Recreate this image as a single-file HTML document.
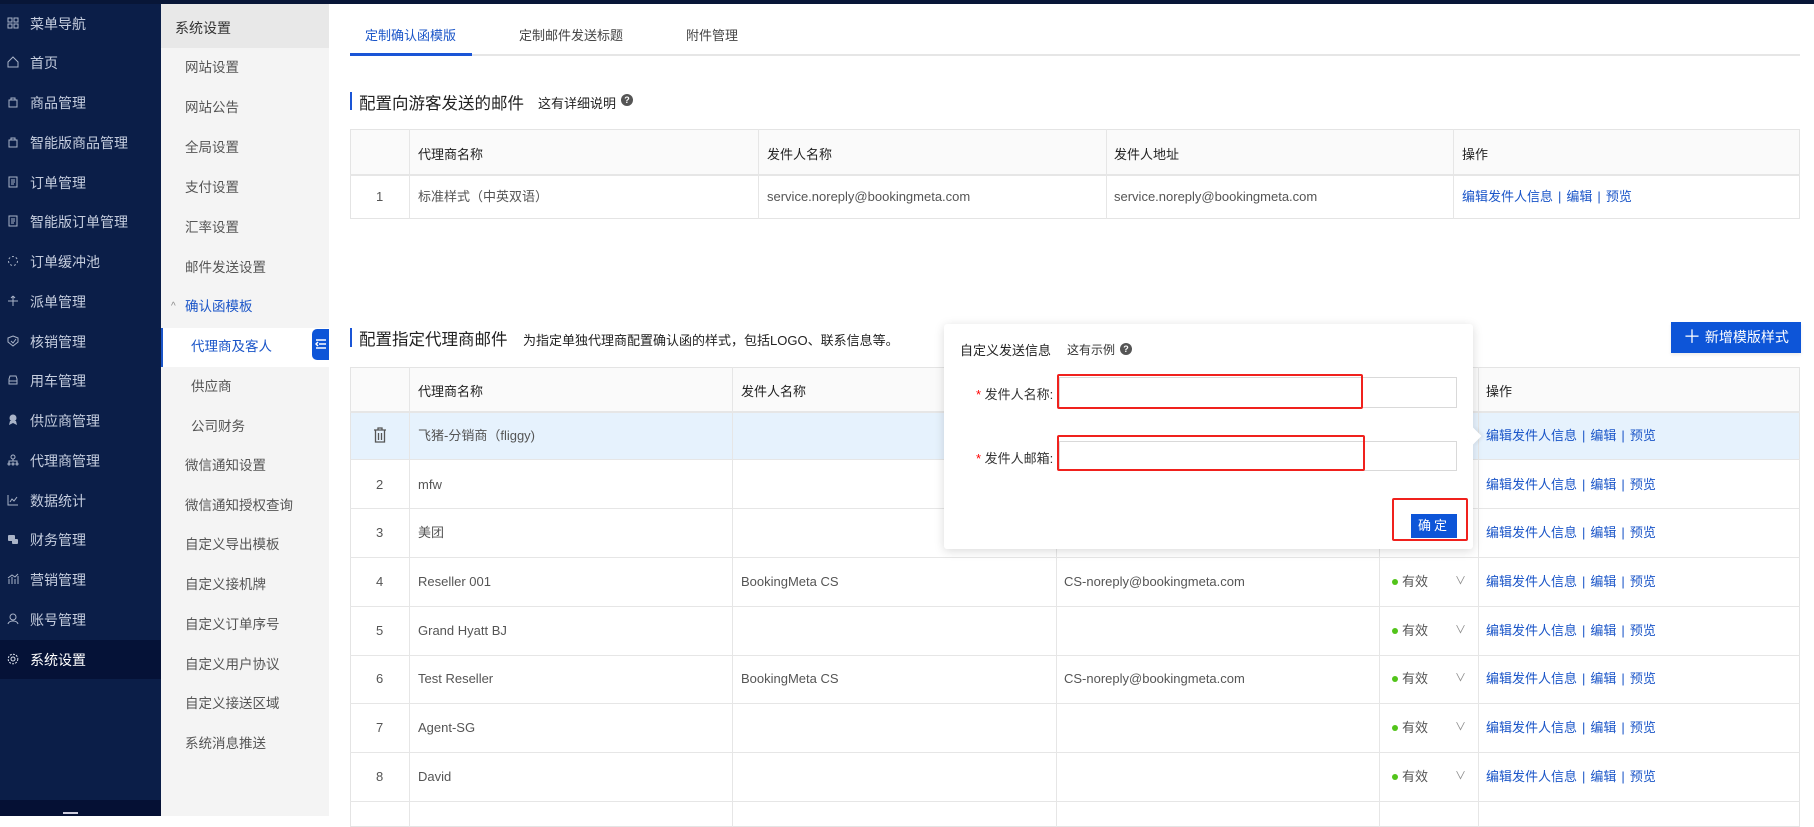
<!DOCTYPE html>
<html><head><meta charset="utf-8"><style>
*{margin:0;padding:0;box-sizing:border-box}
body{width:1814px;height:816px;overflow:hidden;background:#fff;font-family:"Liberation Sans","Noto Sans CJK SC",sans-serif;position:relative;color:#333}
.a{position:absolute;white-space:nowrap}
#top{left:0;top:0;width:1814px;height:4px;background:#081637}
#sb{left:0;top:4px;width:161px;height:812px;background:#0b1e48}
.si{position:absolute;left:0;width:161px;height:40px;line-height:40px;color:#c5cdde;font-size:14px;padding-left:30px}
.si svg{position:absolute;left:7px;top:13px}
#sub{left:161px;top:4px;width:168px;height:812px;background:#f4f4f4}
.su{position:absolute;left:24px;font-size:13.5px;color:#555;line-height:20px}
.line{position:absolute;background:#e6e6e6}
.txt{position:absolute;font-size:13px;color:#555;white-space:nowrap;line-height:18px}
.lk{color:#1a55c8}
.lk i{font-style:normal;padding:0 5px}
.hd{position:absolute;font-size:13px;color:#222;white-space:nowrap}
</style></head><body>
<div id="top" class="a"></div>
<div id="sb" class="a">
 <div class="si" style="top:0"><svg width="12" height="12" fill="none" stroke="#aab4c8"><rect x="1" y="1" width="4" height="4"/><rect x="7" y="1" width="4" height="4"/><rect x="1" y="7" width="4" height="4"/><rect x="7" y="7" width="4" height="4"/></svg>菜单导航</div>
 <div class="si" style="top:39px"><svg width="12" height="12" fill="none" stroke="#aab4c8"><path d="M1 6L6 1L11 6V11H1Z"/></svg>首页</div>
 <div class="si" style="top:79px"><svg width="12" height="12" fill="none" stroke="#aab4c8"><path d="M2 4H10V11H2Z M4 4V2H8V4"/></svg>商品管理</div>
 <div class="si" style="top:119px"><svg width="12" height="12" fill="none" stroke="#aab4c8"><path d="M2 4H10V11H2Z M4 4V2H8V4"/></svg>智能版商品管理</div>
 <div class="si" style="top:159px"><svg width="12" height="12" fill="none" stroke="#aab4c8"><rect x="2" y="1" width="8" height="10"/><path d="M4 4H8M4 6H8M4 8H7"/></svg>订单管理</div>
 <div class="si" style="top:198px"><svg width="12" height="12" fill="none" stroke="#aab4c8"><rect x="2" y="1" width="8" height="10"/><path d="M4 4H8M4 6H8M4 8H7"/></svg>智能版订单管理</div>
 <div class="si" style="top:238px"><svg width="12" height="12" fill="none" stroke="#aab4c8" stroke-dasharray="2 2"><circle cx="6" cy="6" r="4.5"/></svg>订单缓冲池</div>
 <div class="si" style="top:278px"><svg width="12" height="12" fill="none" stroke="#aab4c8"><path d="M6 1V11M1 6H11M6 1L4 3M6 1L8 3"/></svg>派单管理</div>
 <div class="si" style="top:318px"><svg width="12" height="12" fill="none" stroke="#aab4c8"><path d="M6 1L11 3V7L6 11L1 7V3Z M4 6L6 8L9 4"/></svg>核销管理</div>
 <div class="si" style="top:357px"><svg width="12" height="12" fill="none" stroke="#aab4c8"><path d="M2 5L3 2H9L10 5V10H2Z M2 7H10"/></svg>用车管理</div>
 <div class="si" style="top:397px"><svg width="12" height="12" fill="#aab4c8"><circle cx="6" cy="4" r="3.5"/><path d="M3 7L2 11L6 9L10 11L9 7Z"/></svg>供应商管理</div>
 <div class="si" style="top:437px"><svg width="12" height="12" fill="none" stroke="#aab4c8"><circle cx="6" cy="3" r="2"/><path d="M6 5V7M2 9V7H10V9"/><circle cx="2" cy="10" r="1"/><circle cx="6" cy="10" r="1"/><circle cx="10" cy="10" r="1"/></svg>代理商管理</div>
 <div class="si" style="top:477px"><svg width="12" height="12" fill="none" stroke="#aab4c8"><path d="M1 1V11H11M3 8L5 5L7 7L10 3"/></svg>数据统计</div>
 <div class="si" style="top:516px"><svg width="12" height="12" fill="#aab4c8"><rect x="1" y="2" width="7" height="6" rx="1"/><rect x="5" y="6" width="6" height="5" rx="1"/></svg>财务管理</div>
 <div class="si" style="top:556px"><svg width="12" height="12" fill="none" stroke="#aab4c8"><path d="M2 11V6M5 11V4M8 11V6M11 11V3M1 5L5 2L8 4L11 1"/></svg>营销管理</div>
 <div class="si" style="top:596px"><svg width="12" height="12" fill="none" stroke="#aab4c8"><circle cx="6" cy="4" r="3"/><path d="M1 11C2 7 10 7 11 11"/></svg>账号管理</div>
 <div class="si" style="top:636px;height:39px;background:#051237;color:#fff"><svg width="12" height="12" fill="none" stroke="#dde3ee"><circle cx="6" cy="6" r="2"/><circle cx="6" cy="6" r="4.8" stroke-dasharray="2 1.2"/></svg>系统设置</div>
 <div class="a" style="left:0;top:796px;width:161px;height:16px;background:#051034"></div>
 <div class="a" style="left:63px;top:808px;width:15px;height:2px;background:#ccd"></div>
</div>
<div id="sub" class="a">
 <div class="a" style="left:0;top:0;width:168px;height:44px;background:#e8e8e8"></div>
 <div class="su" style="left:14px;top:14px;color:#333;font-size:14px">系统设置</div>
 <div class="su" style="top:54px">网站设置</div>
 <div class="su" style="top:94px">网站公告</div>
 <div class="su" style="top:134px">全局设置</div>
 <div class="su" style="top:174px">支付设置</div>
 <div class="su" style="top:214px">汇率设置</div>
 <div class="su" style="top:254px">邮件发送设置</div>
 <div class="su" style="left:10px;top:293px;color:#888;font-size:10px">^</div>
 <div class="su" style="top:293px;color:#1a55c8">确认函模板</div>
 <div class="a" style="left:0;top:324px;width:168px;height:39px;background:#fff;border-left:2px solid #1a55c8"></div>
 <div class="su" style="left:30px;top:333px;color:#1a55c8">代理商及客人</div>
 <div class="a" style="left:151px;top:325px;width:17px;height:31px;background:#0d55d8;border-radius:5px 0 0 5px"></div>
 <svg class="a" style="left:154px;top:334px" width="12" height="12" fill="none" stroke="#fff" stroke-width="1.5"><path d="M1 2H11M4 6H11M1 10H11M3 4L1 6L3 8"/></svg>
 <div class="su" style="left:30px;top:373px">供应商</div>
 <div class="su" style="left:30px;top:413px">公司财务</div>
 <div class="su" style="top:452px">微信通知设置</div>
 <div class="su" style="top:492px">微信通知授权查询</div>
 <div class="su" style="top:531px">自定义导出模板</div>
 <div class="su" style="top:571px">自定义接机牌</div>
 <div class="su" style="top:611px">自定义订单序号</div>
 <div class="su" style="top:651px">自定义用户协议</div>
 <div class="su" style="top:690px">自定义接送区域</div>
 <div class="su" style="top:730px">系统消息推送</div>
</div>

<div class="txt" style="left:365px;top:27px;color:#1a55c8">定制确认函模版</div>
<div class="txt" style="left:519px;top:27px;color:#444">定制邮件发送标题</div>
<div class="txt" style="left:686px;top:27px;color:#444">附件管理</div>
<div class="line" style="left:350px;top:54px;width:1450px;height:2px"></div>
<div class="a" style="left:350px;top:53px;width:122px;height:3px;background:#1a55d6"></div>

<div class="a" style="left:350px;top:92px;width:2px;height:18px;background:#1a55d6"></div>
<div class="a" style="left:359px;top:90px;font-size:16.5px;color:#222">配置向游客发送的邮件</div>
<div class="a" style="left:538px;top:93px;font-size:13px;color:#222">这有详细说明</div>
<div class="a" style="left:621px;top:94px;width:12px;height:12px;border-radius:6px;background:#555;color:#fff;font-size:9px;line-height:12px;text-align:center;font-weight:bold">?</div>

<div class="a" style="left:350px;top:129px;width:1450px;height:90px;border:1px solid #e4e4e4"></div>
<div class="a" style="left:351px;top:130px;width:1448px;height:44px;background:#fafafa"></div>
<div class="line" style="left:350px;top:174px;width:1450px;height:2px"></div>
<div class="line" style="left:409px;top:129px;width:1px;height:90px"></div>
<div class="line" style="left:758px;top:129px;width:1px;height:90px"></div>
<div class="line" style="left:1106px;top:129px;width:1px;height:90px"></div>
<div class="line" style="left:1453px;top:129px;width:1px;height:90px"></div>
<div class="hd" style="left:418px;top:144px">代理商名称</div>
<div class="hd" style="left:767px;top:144px">发件人名称</div>
<div class="hd" style="left:1114px;top:144px">发件人地址</div>
<div class="hd" style="left:1462px;top:144px">操作</div>
<div class="txt" style="left:376px;top:188px">1</div>
<div class="txt" style="left:418px;top:188px">标准样式（中英双语）</div>
<div class="txt" style="left:767px;top:188px">service.noreply@bookingmeta.com</div>
<div class="txt" style="left:1114px;top:188px">service.noreply@bookingmeta.com</div>
<div class="txt lk" style="left:1462px;top:188px">编辑发件人信息<i>|</i>编辑<i>|</i>预览</div>

<div class="a" style="left:350px;top:328px;width:2px;height:19px;background:#1a55d6"></div>
<div class="a" style="left:359px;top:326px;font-size:16.5px;color:#222">配置指定代理商邮件</div>
<div class="a" style="left:523px;top:330px;font-size:13px;color:#222">为指定单独代理商配置确认函的样式，包括LOGO、联系信息等。</div>
<div class="a" style="left:1671px;top:322px;width:130px;height:31px;background:#0d55d8;color:#fff;font-size:14px;line-height:31px;text-align:center;box-shadow:0 2px 3px rgba(0,0,0,.08)"><span style="font-size:18px;vertical-align:-1px">＋</span> 新增模版样式</div>

<div class="a" style="left:350px;top:367px;width:1450px;height:460px;border:1px solid #e4e4e4"></div>
<div class="a" style="left:351px;top:368px;width:1448px;height:44px;background:#fafafa"></div>
<div class="a" style="left:351px;top:412px;width:1448px;height:48px;background:#e6f2fd"></div>
<div class="line" style="left:350px;top:411px;width:1450px;height:2px"></div>
<div class="line" style="left:350px;top:459px;width:1450px;height:1px"></div>
<div class="line" style="left:350px;top:508px;width:1450px;height:1px"></div>
<div class="line" style="left:350px;top:557px;width:1450px;height:1px"></div>
<div class="line" style="left:350px;top:606px;width:1450px;height:1px"></div>
<div class="line" style="left:350px;top:655px;width:1450px;height:1px"></div>
<div class="line" style="left:350px;top:703px;width:1450px;height:1px"></div>
<div class="line" style="left:350px;top:752px;width:1450px;height:1px"></div>
<div class="line" style="left:350px;top:801px;width:1450px;height:1px"></div>
<div class="line" style="left:409px;top:367px;width:1px;height:460px"></div>
<div class="line" style="left:732px;top:367px;width:1px;height:460px"></div>
<div class="line" style="left:1056px;top:367px;width:1px;height:460px"></div>
<div class="line" style="left:1379px;top:367px;width:1px;height:460px"></div>
<div class="line" style="left:1478px;top:367px;width:1px;height:460px"></div>
<div class="hd" style="left:418px;top:381px">代理商名称</div>
<div class="hd" style="left:741px;top:381px">发件人名称</div>
<div class="hd" style="left:1486px;top:381px">操作</div>

<svg class="a" style="left:373px;top:427px" width="14" height="16" fill="none" stroke="#555" stroke-width="1.3"><path d="M1 3H13M5 3V1H9V3M2.5 3V15H11.5V3M5.5 6V13M8.5 6V13"/></svg>
<div class="txt" style="left:418px;top:427px">飞猪-分销商（fliggy)</div>
<div class="txt lk" style="left:1486px;top:427px">编辑发件人信息<i>|</i>编辑<i>|</i>预览</div>

<div class="txt" style="left:376px;top:476px">2</div><div class="txt" style="left:418px;top:476px">mfw</div><div class="txt lk" style="left:1486px;top:476px">编辑发件人信息<i>|</i>编辑<i>|</i>预览</div>
<div class="txt" style="left:376px;top:524px">3</div><div class="txt" style="left:418px;top:524px">美团</div><div class="txt lk" style="left:1486px;top:524px">编辑发件人信息<i>|</i>编辑<i>|</i>预览</div>

<div class="txt" style="left:376px;top:573px">4</div><div class="txt" style="left:418px;top:573px">Reseller 001</div><div class="txt" style="left:741px;top:573px">BookingMeta CS</div><div class="txt" style="left:1064px;top:573px">CS-noreply@bookingmeta.com</div>
<div class="txt" style="left:376px;top:622px">5</div><div class="txt" style="left:418px;top:622px">Grand Hyatt BJ</div>
<div class="txt" style="left:376px;top:670px">6</div><div class="txt" style="left:418px;top:670px">Test Reseller</div><div class="txt" style="left:741px;top:670px">BookingMeta CS</div><div class="txt" style="left:1064px;top:670px">CS-noreply@bookingmeta.com</div>
<div class="txt" style="left:376px;top:719px">7</div><div class="txt" style="left:418px;top:719px">Agent-SG</div>
<div class="txt" style="left:376px;top:768px">8</div><div class="txt" style="left:418px;top:768px">David</div>

<div id="st"></div>
<script>
var ys=[573,622,670,719,768],h='';
ys.forEach(function(y){h+='<div class="a" style="left:1392px;top:'+(y+6)+'px;width:6px;height:6px;border-radius:3px;background:#52c41a"></div><div class="txt" style="left:1402px;top:'+y+'px">有效</div><div class="txt" style="left:1455px;top:'+(y-1)+'px;color:#888;font-size:11px">∨</div><div class="txt lk" style="left:1486px;top:'+y+'px">编辑发件人信息<i>|</i>编辑<i>|</i>预览</div>';});
document.getElementById('st').innerHTML=h;
</script>

<div class="a" style="left:944px;top:324px;width:529px;height:225px;background:#fff;box-shadow:0 2px 10px rgba(0,0,0,.15);border-radius:3px"></div>
<div class="a" style="left:1467px;top:430px;width:12px;height:12px;background:#fff;transform:rotate(45deg);box-shadow:2px -2px 3px rgba(0,0,0,.06)"></div>
<div class="a" style="left:960px;top:340px;font-size:13px;color:#222">自定义发送信息</div>
<div class="a" style="left:1067px;top:341px;font-size:12px;color:#333">这有示例</div>
<div class="a" style="left:1120px;top:343px;width:12px;height:12px;border-radius:6px;background:#555;color:#fff;font-size:9px;line-height:12px;text-align:center;font-weight:bold">?</div>
<div class="a" style="left:976px;top:384px;font-size:13px;color:#333"><span style="color:#f00">*</span> 发件人名称:</div>
<div class="a" style="left:976px;top:448px;font-size:13px;color:#333"><span style="color:#f00">*</span> 发件人邮箱:</div>
<div class="a" style="left:1059px;top:377px;width:398px;height:31px;border:1px solid #d9d9d9"></div>
<div class="a" style="left:1059px;top:441px;width:398px;height:30px;border:1px solid #d9d9d9"></div>
<div class="a" style="left:1057px;top:374px;width:306px;height:35px;border:2px solid #f0211d;border-radius:2px"></div>
<div class="a" style="left:1057px;top:435px;width:308px;height:36px;border:2px solid #f0211d;border-radius:2px"></div>
<div class="a" style="left:1411px;top:514px;width:46px;height:24px;background:#0d55d8;color:#fff;font-size:13px;line-height:24px;text-align:center;letter-spacing:3px">确定</div>
<div class="a" style="left:1392px;top:498px;width:76px;height:43px;border:2px solid #f0211d;border-radius:2px"></div>
</body></html>
